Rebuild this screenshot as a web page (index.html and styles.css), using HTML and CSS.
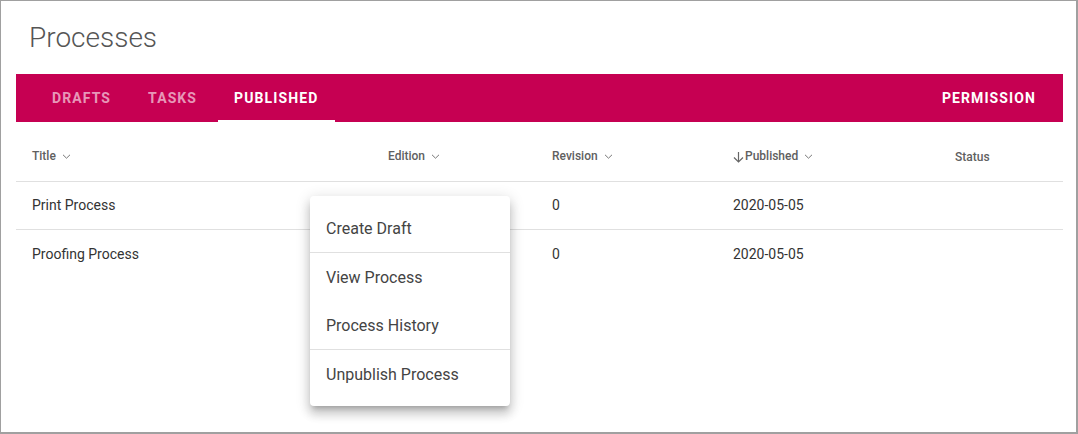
FILE: index.html
```html
<!DOCTYPE html>
<html>
<head>
<meta charset="utf-8">
<link rel="stylesheet" href="styles.css">
</head>
<body>
<div class="frame">
  <h1 class="page-title">Processes</h1>
  <div class="tabbar">
    <div class="tabs">
      <div class="tab">DRAFTS</div>
      <div class="tab">TASKS</div>
      <div class="tab active">PUBLISHED</div>
    </div>
    <div class="tab action">PERMISSION</div>
  </div>
  <div class="table">
    <div class="row head">
      <div class="cell">Title <svg class="chev" width="9" height="5" viewBox="0 0 9 5"><path d="M1 0.8 L4.5 4.2 L8 0.8" fill="none" stroke="#777" stroke-width="1"/></svg></div>
      <div class="cell">Edition <svg class="chev" width="9" height="5" viewBox="0 0 9 5"><path d="M1 0.8 L4.5 4.2 L8 0.8" fill="none" stroke="#777" stroke-width="1"/></svg></div>
      <div class="cell">Revision <svg class="chev" width="9" height="5" viewBox="0 0 9 5"><path d="M1 0.8 L4.5 4.2 L8 0.8" fill="none" stroke="#777" stroke-width="1"/></svg></div>
      <div class="cell"><svg class="arrow" width="11" height="12" viewBox="0 0 11 12"><path d="M5.5 1 V11 M1 6.5 L5.5 11 L10 6.5" fill="none" stroke="#666" stroke-width="1.2"/></svg>Published <svg class="chev" width="9" height="5" viewBox="0 0 9 5"><path d="M1 0.8 L4.5 4.2 L8 0.8" fill="none" stroke="#777" stroke-width="1"/></svg></div>
      <div class="cell status">Status</div>
    </div>
    <div class="row">
      <div class="cell">Print Process</div>
      <div class="cell"></div>
      <div class="cell">0</div>
      <div class="cell">2020-05-05</div>
      <div class="cell"></div>
    </div>
    <div class="row last">
      <div class="cell">Proofing Process</div>
      <div class="cell"></div>
      <div class="cell">0</div>
      <div class="cell">2020-05-05</div>
      <div class="cell"></div>
    </div>
  </div>
  <div class="menu">
    <div class="item">Create Draft</div>
    <div class="sep"></div>
    <div class="item">View Process</div>
    <div class="item">Process History</div>
    <div class="sep"></div>
    <div class="item">Unpublish Process</div>
  </div>
</div>
</body>
</html>
```
FILE: styles.css
```css
* { box-sizing: border-box; }
html, body { margin: 0; padding: 0; background: #fff; }
body { font-family: Roboto, "Noto Sans", sans-serif; }
.frame {
  position: relative;
  width: 1078px;
  height: 434px;
  border: 1px solid #a0a0a0;
  border-right-width: 2px;
  border-bottom-width: 2px;
  padding: 0 13px 0 15px;
  overflow: hidden;
}
.page-title {
  margin: 0;
  height: 73px;
  padding: 20px 0 0 13px;
  font-size: 28px;
  font-weight: 300;
  color: #555;
  line-height: 34px;
}
.tabbar {
  height: 48px;
  background: #c60052;
  display: flex;
  justify-content: space-between;
  padding: 0 11px 0 20px;
}
.tabs { display: flex; gap: 5px; }
.tab {
  height: 48px;
  padding: 0 16px;
  display: flex;
  align-items: center;
  font-size: 14px;
  font-weight: 700;
  letter-spacing: 1.1px;
  color: rgba(255,255,255,0.6);
  position: relative;
}
.tab.active { color: #fff; padding-right: 17px; }
.tab.active::after {
  content: "";
  position: absolute;
  left: 0; right: 0; bottom: 0;
  height: 2px;
  background: #fff;
}
.tab.action { color: #fff; }
.row {
  display: grid;
  grid-template-columns: 356px 164px 181px 222px 1fr;
  padding-left: 16px;
  height: 48px;
  align-items: center;
  border-bottom: 1px solid #e0e0e0;
  font-size: 14px;
  color: #333;
  padding-bottom: 1px;
}
.row.head {
  height: 60px;
  font-size: 12px;
  font-weight: 500;
  color: #606060;
  padding-top: 8px;
  padding-bottom: 0;
}
.row.last { border-bottom: none; }
.cell { display: flex; align-items: center; white-space: nowrap; }
.chev { margin-left: 6px; margin-top: 1px; }
.arrow { margin-right: 1px; margin-top: 2px; }
.status { padding-top: 2px; }
.menu {
  position: absolute;
  left: 309px;
  top: 195px;
  width: 200px;
  padding: 8px 0;
  background: #fff;
  border-radius: 4px;
  box-shadow: 0 5px 5px -3px rgba(0,0,0,.2), 0 8px 10px 1px rgba(0,0,0,.14), 0 3px 14px 2px rgba(0,0,0,.12);
}
.item {
  height: 48px;
  padding: 0 16px;
  display: flex;
  align-items: center;
  font-size: 16px;
  color: #444;
}
.sep { height: 1px; background: #e0e0e0; }
```
